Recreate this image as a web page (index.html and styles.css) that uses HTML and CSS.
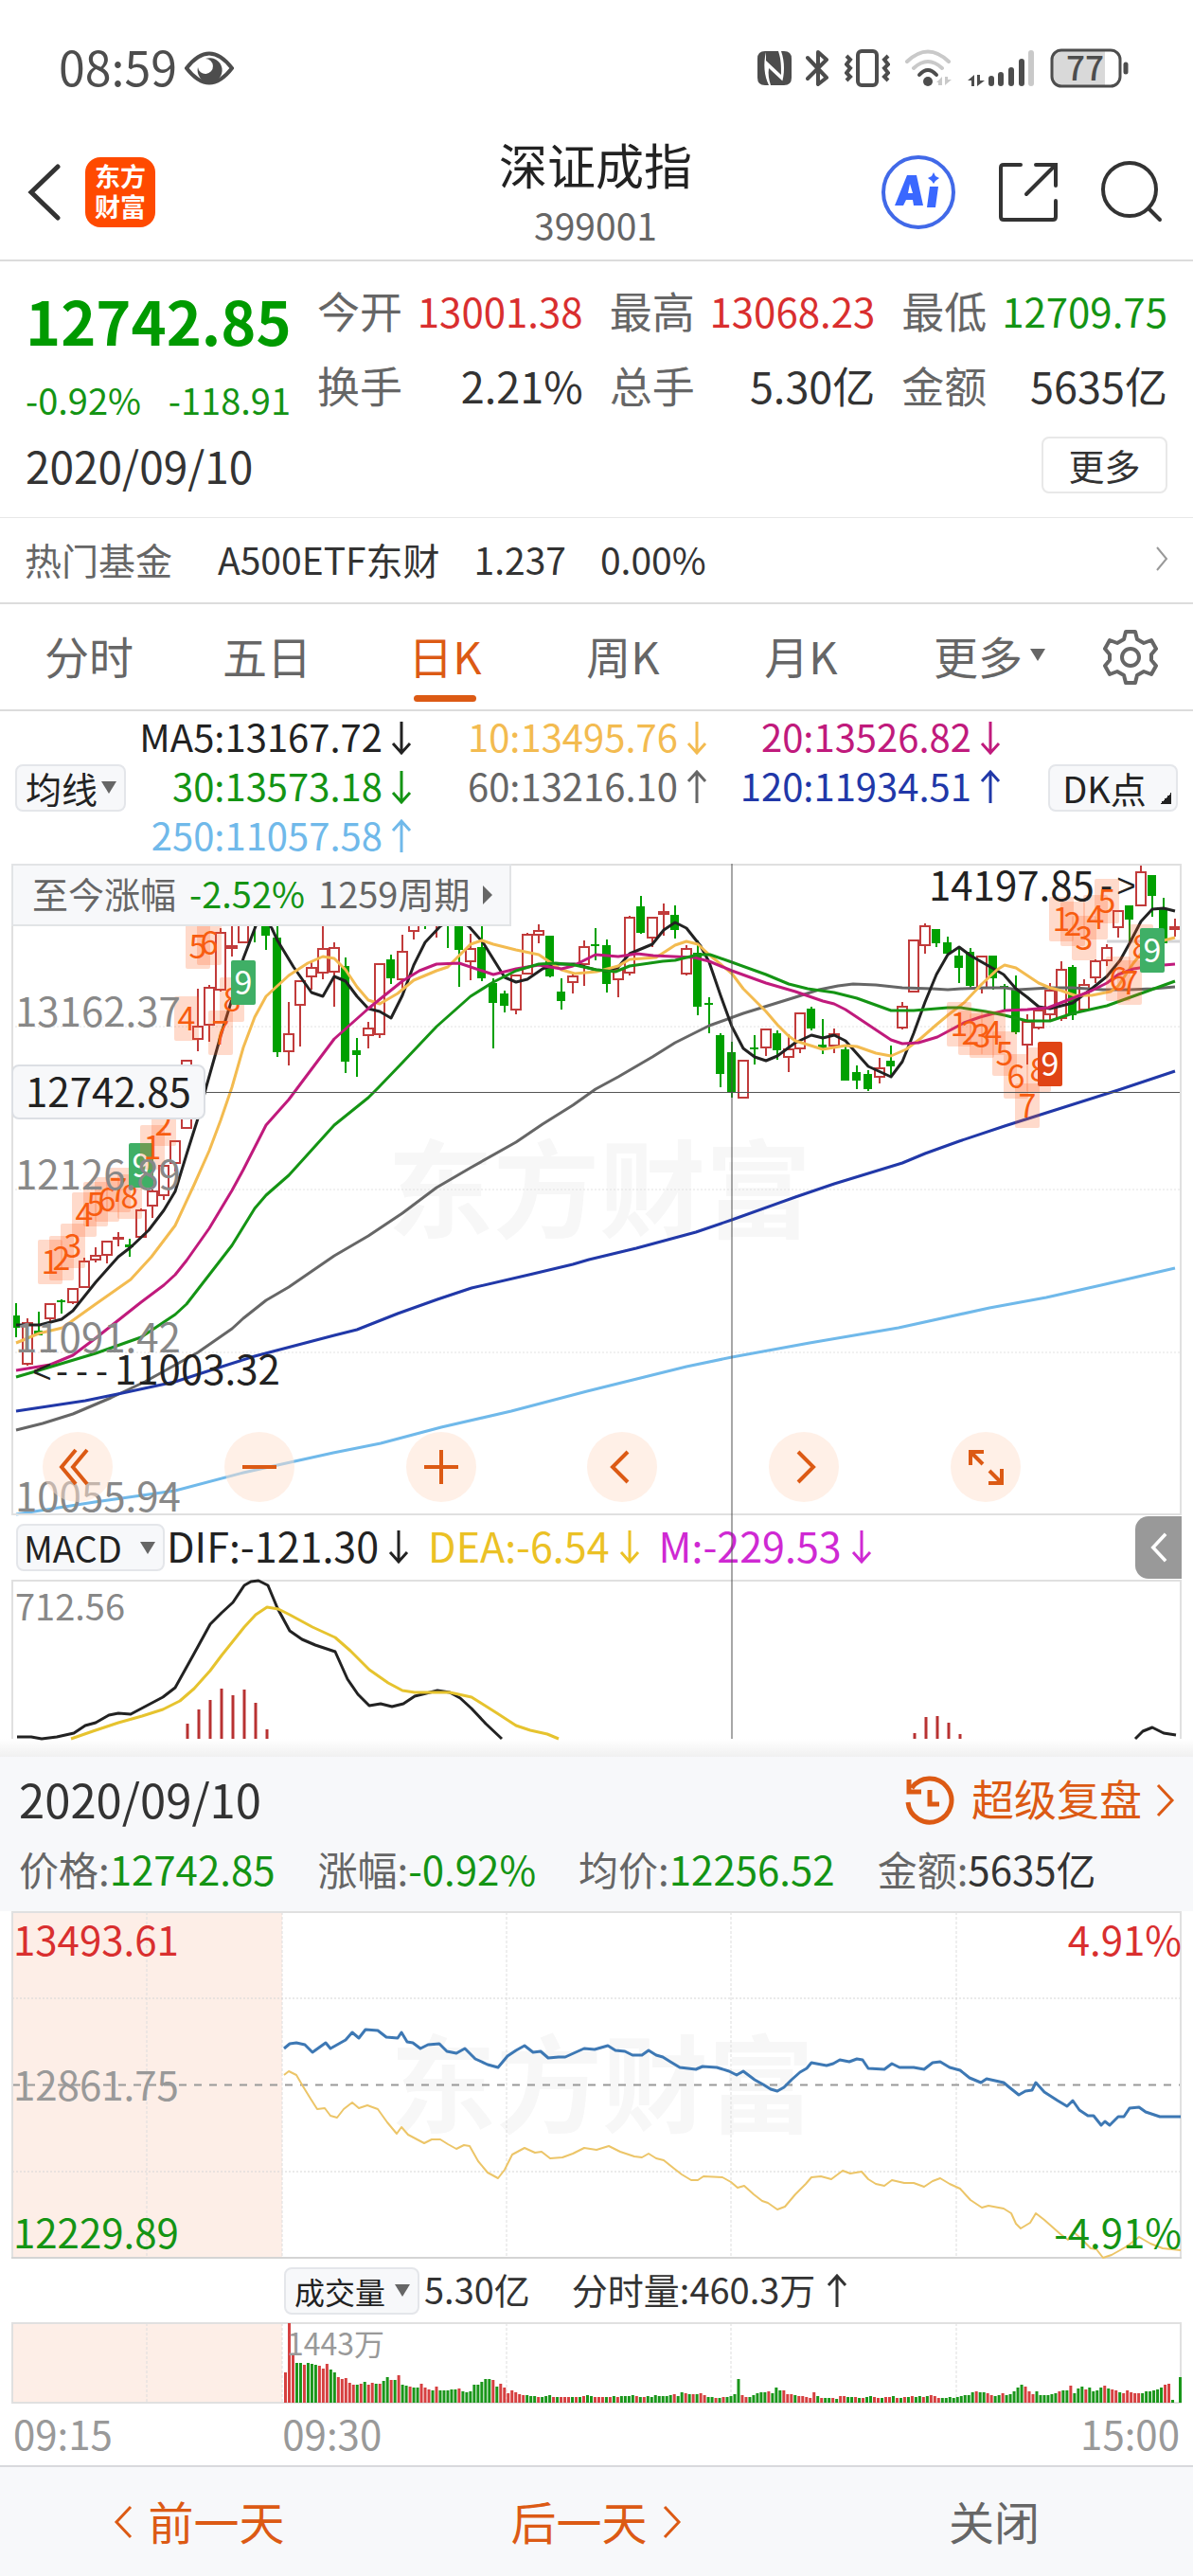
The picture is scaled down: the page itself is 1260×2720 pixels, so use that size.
FILE: index.html
```html
<!DOCTYPE html>
<html lang="zh-CN">
<head>
<meta charset="utf-8">
<meta name="viewport" content="width=device-width, initial-scale=1">
<title>深证成指 399001</title>
<link rel="stylesheet" href="styles.css">
</head>
<body>
<svg class="defs" aria-hidden="true">
  <symbol id="down" viewBox="0 0 22 36"><path d="M11 1V34M2 24L11 34L20 24"/></symbol>
  <symbol id="up" viewBox="0 0 22 36"><path d="M11 35V2M2 12L11 2L20 12"/></symbol>
  <symbol id="left" viewBox="0 0 22 36"><path d="M19 2L4 18L19 34"/></symbol>
  <symbol id="right" viewBox="0 0 22 36"><path d="M3 2L18 18L3 34"/></symbol>
</svg>

<div class="status">
  <span class="clock">08:59</span>
  <svg class="eye" width="52" height="36" viewBox="0 0 52 36"><path d="M2 18Q26-13 50 18Q26 49 2 18Z" fill="none" stroke="#4d4d4d" stroke-width="4"/><path d="M22 8A13 13 0 1 1 14 17A8 8 0 1 0 22 8Z" fill="#4d4d4d"/></svg>
  <div class="signals">
    <svg width="36" height="38" viewBox="0 0 36 38"><path d="M8 1H22C25 10 25 16 25 26L9 11V2C6 14 7 27 12 37H8Q0 37 0 29V9Q0 1 8 1Z" fill="#4d4d4d"/><path d="M25 1H28Q36 1 36 9V29Q36 37 28 37H25C29 26 29 12 25 1ZM12 19L27 33V37H14C12 31 11 25 12 19Z" fill="#4d4d4d"/></svg>
    <svg width="26" height="40" viewBox="0 0 26 40"><path d="M2 9L22 30L13 37V3L22 11L2 31" fill="none" stroke="#4d4d4d" stroke-width="4" stroke-linejoin="round" stroke-linecap="round"/></svg>
    <svg width="48" height="40" viewBox="0 0 48 40"><rect x="14" y="2" width="20" height="36" rx="4" fill="none" stroke="#4d4d4d" stroke-width="4"/><path d="M2 7L6 11L2 16L6 20L2 25L6 29L2 33M46 7L42 11L46 16L42 20L46 25L42 29L46 33" fill="none" stroke="#4d4d4d" stroke-width="4"/></svg>
    <svg width="52" height="40" viewBox="0 0 52 40"><g fill="none" stroke-width="4" stroke-linecap="round"><path d="M3 13Q25-8 47 13M10 20Q25 6 40 20" stroke="#c9c9c9"/><path d="M16 27Q25 17 34 27" stroke="#4d4d4d"/></g><circle cx="25" cy="34" r="5" fill="#4d4d4d"/><path d="M40 29V38H36V35H34ZM43 29V38L50 32H46V29Z" fill="#c9c9c9"/></svg>
    <svg width="72" height="40" viewBox="0 0 72 40"><path d="M7 27V39H4V33H0ZM10 27V39L18 33H13V27Z" fill="#4d4d4d"/><g stroke-width="6" stroke-linecap="round" stroke="#4d4d4d"><path d="M25 31V36M35 27V36M46 22V36M57 13V36"/><path d="M67 4V36" stroke="#c9c9c9"/></g></svg>
    <svg width="84" height="42" viewBox="0 0 84 42"><path d="M10 2H58V40H10Q2 40 2 32V10Q2 2 10 2Z" fill="#d9d9d9"/><rect x="2" y="2" width="72" height="38" rx="10" fill="none" stroke="#4d4d4d" stroke-width="3"/><path d="M80 17V25" stroke="#4d4d4d" stroke-width="5" stroke-linecap="round"/><text x="37" y="34" text-anchor="middle" class="battery">77</text></svg>
  </div>
</div>

<header class="bar">
  <button class="plain" aria-label="返回"><svg width="36" height="60" viewBox="0 0 36 60"><path d="M32 3L4 30L32 57" fill="none" stroke="#333" stroke-width="5" stroke-linecap="round"/></svg></button>
  <a class="logo" href="#home">东方<br>财富</a>
  <div class="title"><h1>深证成指</h1><p>399001</p></div>
  <div class="actions">
    <button class="plain ai" aria-label="Ai"><svg width="80" height="80" viewBox="0 0 80 80"><circle cx="40" cy="40" r="37" fill="none" stroke="#4169e8" stroke-width="4"/><path d="M28 22H38L45 54H35L34 48H27L24 54H15ZM31 31L29 41H34Z" fill="#3a68ff" fill-rule="evenodd"/><path d="M52 34H61L58 56H49ZM56 19L58 23L62 25L58 28L56 31L54 28L50 25L54 23Z" fill="#3a68ff"/></svg></button>
    <button class="plain" aria-label="分享"><svg width="64" height="64" viewBox="0 0 64 64"><path d="M24 3H6Q3 3 3 6V58Q3 61 6 61H58Q61 61 61 58V41M40 3H61V25M61 3L30 34" fill="none" stroke="#333" stroke-width="4" stroke-linecap="round"/></svg></button>
    <button class="plain" aria-label="搜索"><svg width="66" height="66" viewBox="0 0 66 66"><circle cx="31" cy="30" r="28" fill="none" stroke="#333" stroke-width="4"/><path d="M51 50L63 62" stroke="#333" stroke-width="4" stroke-linecap="round"/></svg></button>
  </div>
</header>

<section class="quote">
  <div class="now">
    <strong>12742.85</strong>
    <div class="change"><span>-0.92%</span><span>-118.91</span></div>
  </div>
  <dl>
    <div class="small"><dt>今开</dt><dd class="up">13001.38</dd></div>
    <div class="small"><dt>最高</dt><dd class="up">13068.23</dd></div>
    <div class="small"><dt>最低</dt><dd class="fall">12709.75</dd></div>
    <div><dt>换手</dt><dd>2.21%</dd></div>
    <div><dt>总手</dt><dd>5.30亿</dd></div>
    <div><dt>金额</dt><dd>5635亿</dd></div>
  </dl>
  <div class="day"><time>2020/09/10</time><button>更多</button></div>
</section>

<a class="fund" href="#fund">
  <span class="muted">热门基金</span><span>A500ETF东财</span><span>1.237</span><span>0.00%</span>
  <svg class="go" width="14" height="26" viewBox="0 0 14 26"><path d="M2 1L12 13L2 25" fill="none" stroke="#999" stroke-width="2"/></svg>
</a>

<nav class="tabs">
  <button>分时</button><button>五日</button><button class="active">日K</button><button>周K</button><button>月K</button><button class="more">更多<i class="tri"></i></button>
  <button class="gear" aria-label="设置"><svg width="58" height="60" viewBox="0 0 58 60"><path d="M24 3H34L36 11L43 15L51 12L56 21L51 27V33L56 39L51 48L43 45L36 49L34 57H24L22 49L15 45L7 48L2 39L7 33V27L2 21L7 12L15 15L22 11Z" fill="none" stroke="#666" stroke-width="4" stroke-linejoin="round"/><circle cx="29" cy="30" r="9" fill="none" stroke="#666" stroke-width="4"/></svg></button>
</nav>

<section class="averages">
  <label class="pick"><select aria-label="均线"><option>均线</option></select><i class="tri"></i></label>
  <ul>
    <li class="c5">MA5:13167.72<svg><use href="#down"/></svg></li>
    <li class="c10">10:13495.76<svg><use href="#down"/></svg></li>
    <li class="c20">20:13526.82<svg><use href="#down"/></svg></li>
    <li class="c30">30:13573.18<svg><use href="#down"/></svg></li>
    <li class="c60">60:13216.10<svg><use href="#up"/></svg></li>
    <li class="c120">120:11934.51<svg><use href="#up"/></svg></li>
    <li class="c250">250:11057.58<svg><use href="#up"/></svg></li>
  </ul>
  <button class="dk">DK点</button>
</section>

<section class="charts">
  <div class="kline">
    <svg id="kline" viewBox="12 911 1236 688" role="img" aria-label="日K线图"></svg>
    <button class="since"><span>至今涨幅</span><span class="fall">-2.52%</span><span>1259周期</span><i></i></button>
    <output class="tag">12742.85</output>
    <div class="tools">
      <button aria-label="最左"><svg viewBox="0 0 74 74"><path d="M35 19L20 37L35 55M47 19L32 37L47 55"/></svg></button>
      <button aria-label="缩小"><svg viewBox="0 0 74 74"><path d="M19 37H55"/></svg></button>
      <button aria-label="放大"><svg viewBox="0 0 74 74"><path d="M19 37H55M37 19V55"/></svg></button>
      <button aria-label="左移"><svg viewBox="0 0 74 74"><path d="M43 21L27 37L43 53"/></svg></button>
      <button aria-label="右移"><svg viewBox="0 0 74 74"><path d="M31 21L47 37L31 53"/></svg></button>
      <button aria-label="全屏"><svg viewBox="0 0 74 74"><path d="M21 35V21H35M21 21L34 34M54 39V54H40M54 54L41 41"/></svg></button>
    </div>
  </div>
  <div class="macd">
    <label class="pick"><select aria-label="指标"><option>MACD</option></select><i class="tri"></i></label>
    <span>DIF:-121.30<svg><use href="#down"/></svg></span>
    <span class="dea">DEA:-6.54<svg><use href="#down"/></svg></span>
    <span class="m">M:-229.53<svg><use href="#down"/></svg></span>
    <button class="drawer" aria-label="展开"><svg><use href="#left"/></svg></button>
  </div>
  <svg id="macd" viewBox="12 1667 1236 168" role="img" aria-label="MACD"></svg>
  <div class="crosshair"></div>
</section>

<section class="replay">
  <div class="fade"></div>
  <div class="summary">
    <div class="head">
      <time>2020/09/10</time>
      <a href="#replay"><svg width="54" height="54" viewBox="0 0 54 54"><path d="M8 13A23 23 0 1 1 4 28M5 4V17H18M27 15V30H37" fill="none" stroke="#dc5a14" stroke-width="5"/></svg>超级复盘<svg class="arrow"><use href="#right"/></svg></a>
    </div>
    <div class="figures">
      <span>价格:<b class="fall">12742.85</b></span><span>涨幅:<b class="fall">-0.92%</b></span><span>均价:<b class="fall">12256.52</b></span><span>金额:<b>5635亿</b></span>
    </div>
  </div>
  <div class="intraday">
    <svg id="intraday" viewBox="12 2017 1236 367" role="img" aria-label="分时走势"></svg>
    <div class="volume-head">
      <label class="pick"><select aria-label="副图"><option>成交量</option></select><i class="tri"></i></label>
      <span>5.30亿</span><span class="tick">分时量:460.3万<svg><use href="#up"/></svg></span>
    </div>
    <svg id="volume" viewBox="12 2451 1236 86" role="img" aria-label="成交量"></svg>
    <div class="hours"><span>09:15</span><span>09:30</span><span>15:00</span></div>
  </div>
</section>

<nav class="foot">
  <button><svg><use href="#left"/></svg>前一天</button>
  <button>后一天<svg><use href="#right"/></svg></button>
  <button class="close">关闭</button>
</nav>
<script src="charts.js"></script>
</body>
</html>
```

FILE: styles.css
```css
* { box-sizing: border-box; }
body {
  margin: 0;
  background: #fff;
  color: #333;
  font-family: "Noto Sans CJK SC", "Noto Sans", sans-serif;
  font-size: 40px;
  line-height: 52px;
}
h1, p, dl, dd, ul { margin: 0; padding: 0; font-weight: 400; }
ul { list-style: none; }
button, select {
  font: inherit;
  color: inherit;
  background: none;
  border: 0;
  padding: 0;
  margin: 0;
}
a { color: inherit; text-decoration: none; }
svg { display: block; flex: none; }
.defs { display: none; }
.up { color: #d92f2f; }
.fall { color: #149414; }
.muted { color: #666; }
.tri {
  width: 0;
  height: 0;
  border: 8px solid transparent;
  border-top: 13px solid #666;
  border-bottom: 0;
}

.status {
  display: flex;
  align-items: center;
  padding: 42px 67px 30px 62px;
  height: 132px;
  color: #4d4d4d;
}
.clock { font-size: 50px; line-height: 60px; padding-bottom: 6px; }
.eye { margin-left: 8px; }
.signals { display: flex; align-items: center; gap: 15px; margin-left: auto; }
.battery { font: 500 35px "Noto Sans CJK SC", sans-serif; fill: #4d4d4d; }

.bar {
  display: grid;
  grid-template-columns: 36px 74px 1fr auto;
  column-gap: 25px;
  align-items: center;
  height: 144px;
  padding: 0 32px 0 29px;
  border-bottom: 2px solid #dcdcdc;
  position: relative;
}
.logo {
  height: 74px;
  padding-top: 4px;
  border-radius: 16px;
  background: #ff4a00;
  color: #fff;
  font-size: 27px;
  font-weight: 700;
  line-height: 32px;
  text-align: center;
}
.title {
  position: absolute;
  left: 0;
  right: 2px;
  text-align: center;
  pointer-events: none;
}
.title h1 { font-size: 51px; line-height: 60px; color: #222; }
.title p { margin-top: 8px; font-size: 39px; line-height: 52px; color: #666; }
.actions { grid-column: 4; display: flex; align-items: center; gap: 44px; }

.quote {
  display: grid;
  grid-template-columns: 280px 1fr;
  column-gap: 28px;
  row-gap: 15px;
  padding: 22px 27px 25px 27px;
  border-bottom: 1px solid #e8e8e8;
}
.now strong { display: block; font-size: 63px; line-height: 80px; color: #009a00; }
.change {
  display: flex;
  justify-content: space-between;
  margin-top: 20px;
  font-size: 38px;
  line-height: 48px;
  color: #149414;
}
.quote dl { display: grid; grid-template-columns: repeat(3, 1fr); gap: 19px 28px; align-content: start; }
.quote dl div { display: flex; justify-content: space-between; font-size: 45px; line-height: 60px; }
.quote dl .small dd { font-size: 42px; }
.quote dt { color: #666; }
.day {
  grid-column: 1 / -1;
  display: flex;
  justify-content: space-between;
  font-size: 46px;
  line-height: 60px;
}
.day button {
  width: 133px;
  height: 60px;
  border: 2px solid #e8e8e8;
  border-radius: 8px;
  font-size: 38px;
  line-height: 50px;
}

.fund {
  display: flex;
  align-items: center;
  gap: 36px;
  height: 91px;
  padding: 0 26px 4px 26px;
  border-bottom: 2px solid #dcdcdc;
  font-size: 39px;
}
.fund .muted { margin-right: 12px; }
.go { margin-left: auto; }

.tabs {
  display: grid;
  grid-template-columns: repeat(6, 1fr) 132px;
  height: 113px;
  border-bottom: 2px solid #dcdcdc;
  color: #666;
  font-size: 47px;
}
.tabs button {
  display: flex;
  align-items: center;
  justify-content: center;
  padding-bottom: 4px;
}
.tabs .active { color: #dc5a14; position: relative; }
.tabs .active::after {
  content: "";
  position: absolute;
  bottom: 8px;
  left: 50%;
  width: 66px;
  height: 7px;
  margin-left: -33px;
  border-radius: 4px;
  background: #dc5a14;
}
.tabs .more { gap: 8px; padding-left: 22px; }
.tabs .gear { padding: 0; }

.pick {
  display: flex;
  align-items: center;
  height: 50px;
  border: 2px solid #e4e6ea;
  border-radius: 8px;
  background: #f7f8fa;
  color: #222;
  font-size: 38px;
  position: relative;
}
.pick select { appearance: none; width: 100%; height: 46px; line-height: 46px; padding: 0 0 3px 9px; }
.pick .tri { position: absolute; right: 8px; pointer-events: none; }

.averages { display: flex; align-items: center; height: 161px; padding: 0 16px; }
.averages .pick { width: 117px; }
.averages ul { flex: 1; display: grid; grid-template-columns: 302fr 312fr 310fr; padding-bottom: 5px; }
.averages li {
  display: flex;
  justify-content: flex-end;
  gap: 9px;
  font-size: 40px;
}
.averages li svg, .macd span svg, .tick svg {
  width: 22px;
  height: 36px;
  margin-top: 10px;
  fill: none;
  stroke: currentColor;
  stroke-width: 3;
}
.dk {
  width: 137px;
  height: 50px;
  margin-left: 50px;
  padding-right: 18px;
  border: 2px solid #e4e6ea;
  border-radius: 8px;
  background: linear-gradient(135deg, transparent 50%, #222 50%) 116px 28px / 12px 12px no-repeat #f7f8fa;
  color: #222;
  font-size: 38px;
  line-height: 42px;
}
.c5 { color: #222; }
.c10 { color: #f3bb50; }
.c20 { color: #c01a7c; }
.c30 { color: #149414; }
.c60 { color: #666; }
.c120 { color: #2138a8; }
.c250 { color: #70b9ea; }

.charts { position: relative; margin: 0 12px; }
.charts > svg, .kline > svg, .intraday > svg { width: 100%; height: auto; overflow: visible; }
.kline { position: relative; }
.crosshair {
  position: absolute;
  top: 0;
  bottom: 0;
  left: 61.5%;
  width: 2px;
  background: rgba(80, 80, 80, .5);
  pointer-events: none;
}
.since {
  position: absolute;
  left: 0;
  top: 0;
  display: flex;
  align-items: center;
  gap: 14px;
  height: 66px;
  padding: 0 18px 4px 20px;
  border: 2px solid #e2e4e6;
  background: #f7f8fa;
  color: #666;
  font-size: 38px;
}
.since i {
  margin-top: 4px;
  border: 10px solid transparent;
  border-left-color: #666;
  border-right: 0;
}
.tag {
  position: absolute;
  left: 0;
  top: 30.8%;
  width: 205px;
  height: 58px;
  border: 2px solid #dcdfe4;
  border-radius: 8px;
  background: #f7f8fa;
  color: #222;
  font-size: 42px;
  line-height: 50px;
  text-align: center;
}
.tools {
  position: absolute;
  left: 33px;
  right: 170px;
  bottom: 14px;
  display: flex;
  justify-content: space-between;
}
.tools button { width: 74px; height: 74px; border-radius: 50%; background: rgba(255, 225, 208, .5); }
.tools path { fill: none; stroke: #dc5a14; stroke-width: 4; }

.macd {
  display: flex;
  align-items: center;
  height: 68px;
  padding-left: 5px;
  gap: 20px;
  color: #222;
  font-size: 43px;
}
.macd .pick { width: 157px; margin-right: -18px; }
.macd .pick select { padding-left: 6px; }
.macd span { display: flex; gap: 10px; padding-bottom: 6px; }
.macd .dea { color: #ebc125; }
.macd .m { color: #cf29d3; }
.drawer {
  width: 49px;
  height: 66px;
  margin-left: auto;
  border-radius: 14px 0 0 14px;
  background: #999;
}
.drawer svg { width: 22px; height: 32px; margin: 0 auto; fill: none; stroke: #fff; stroke-width: 4; }

.fade { height: 19px; background: linear-gradient(#fff, #f0f0f0); }
.summary { padding: 14px 18px 20px 20px; background: #f7f8fa; }
.head { display: flex; justify-content: space-between; font-size: 49px; line-height: 60px; }
.head a { display: flex; align-items: center; font-size: 45px; color: #dc5a14; }
.head a svg { margin: 6px 17px 0 0; }
.head a .arrow { width: 22px; height: 36px; margin: 4px 0 0 14px; fill: none; stroke: #dc5a14; stroke-width: 3; }
.figures { display: flex; gap: 45px; margin-top: 19px; font-size: 42px; line-height: 50px; color: #666; }
.figures b { font-weight: 400; color: #333; }
.figures .fall { color: #149414; }
.intraday { margin: 0 12px; }
.volume-head {
  display: flex;
  align-items: center;
  height: 67px;
  padding-left: 288px;
  font-size: 38px;
}
.volume-head .pick { width: 143px; margin-right: 5px; font-size: 32px; }
.volume-head span { display: flex; padding-bottom: 4px; }
.volume-head .tick { margin-left: 44px; gap: 12px; }
.hours {
  display: grid;
  grid-template-columns: 3fr 5fr 5fr;
  padding: 1px 2px 4px 2px;
  font-size: 42px;
  line-height: 60px;
  color: #999;
}
.hours :last-child { text-align: right; }

.foot {
  display: grid;
  grid-template-columns: repeat(3, 1fr);
  height: 117px;
  border-top: 2px solid #d8d9dd;
  background: #f7f8fa;
  color: #dc5a14;
  font-size: 48px;
}
.foot button { display: flex; align-items: center; justify-content: center; gap: 15px; padding-bottom: 4px; }
.foot svg { width: 22px; height: 36px; margin-top: 4px; fill: none; stroke: currentColor; stroke-width: 3; }
.foot .close { color: #666; }

.axis { font-size: 42px; fill: #888; }
.axis.dark { fill: #222; }
.axis.red { fill: #d92f2f; }
.axis.green { fill: #149414; }
.axis.pale { fill: #999; }
.axis.end { text-anchor: end; }
.axis.mid { font-size: 38px; }
.axis.low { font-size: 32px; fill: #999; }
.lead { font: 35px "Liberation Mono", monospace; fill: #222; }
.mark { font-size: 34px; text-anchor: middle; fill: #f75c0f; }
.mark.nine { fill: #fff; }
.water { font-size: 112px; font-weight: 700; fill: #f7f7f7; }
```

FILE: charts.js
```js
const NS = 'http://www.w3.org/2000/svg';

function add(svg, tag, attrs, text) {
  const el = document.createElementNS(NS, tag);
  for (const key in attrs) el.setAttribute(key, attrs[key]);
  if (text) el.textContent = text;
  svg.appendChild(el);
  return el;
}
const line = (svg, points, stroke, width) =>
  add(svg, 'polyline', { points, stroke, 'stroke-width': width, fill: 'none', 'stroke-linejoin': 'round' });
const path = (svg, d, stroke, width, dash) =>
  add(svg, 'path', { d, stroke, 'stroke-width': width, fill: 'none', 'stroke-dasharray': dash || 'none' });
const label = (svg, x, y, cls, text) => add(svg, 'text', { x, y, class: cls }, text);

const RED = '#c13b3b';
const GREEN = '#00a000';

/* Daily candles: colour, high, body top, body bottom, low */
const candles = `g1375,1388,1401,1411 r1391,1396,1439,1441 g1384,1404,1409,1409 r1375,1376,1391,1396 g1371,1372,1374,1386
r1359,1360,1374,1376 r1327,1331,1358,1358 r1316,1325,1329,1332 r1310,1310,1324,1333 r1300,1306,1307,1315
g1307,1313,1316,1326 r1275,1277,1305,1305 r1255,1257,1272,1285 r1230,1230,1261,1266 r1203,1204,1227,1236
r1119,1119,1190,1190 r1043,1083,1096,1109 r1039,1042,1081,1099 r979,984,1044,1046 r970,998,1000,1009
r950,960,994,994 g950,955,970,994 g965,968,987,1002 g977,989,1110,1115 r1057,1091,1109,1124
r1034,1035,1060,1104 r1014,1021,1030,1044 r970,1001,1026,1033 r994,1000,1025,1062 g1010,1019,1120,1132
g1095,1108,1113,1136 r1078,1085,1092,1106 r1016,1017,1091,1095 g1007,1012,1032,1038 r986,1004,1033,1043
r970,972,982,991 g960,965,972,980 r950,955,970,989 g950,955,972,1000 g960,970,1002,1041
r985,1001,1014,1034 g970,999,1032,1035 g1032,1037,1058,1106 g1045,1048,1061,1068 r1029,1029,1065,1070
r984,986,1027,1028 r975,982,986,995 g987,987,1030,1031 g1032,1046,1056,1065 r1027,1030,1036,1048
r992,999,1017,1040 g979,996,998,1013 g991,997,1038,1047 r1020,1023,1033,1052 r966,968,1026,1029
g945,956,984,985 r968,968,989,999 r953,962,964,987 g955,965,981,990 r997,1001,1027,1029
g992,1005,1062,1071 g1052,1058,1060,1090 g1090,1092,1133,1147 g1099,1110,1152,1158 r1118,1119,1158,1158
g1092,1105,1107,1123 r1086,1086,1105,1114 g1087,1090,1108,1118 r1091,1107,1115,1131 r1069,1069,1106,1111
g1062,1064,1085,1087 g1075,1102,1106,1112 r1085,1091,1103,1111 g1104,1107,1140,1140 g1124,1131,1140,1149
g1129,1133,1149,1151 r1116,1127,1136,1143 g1103,1119,1125,1137 r1057,1062,1084,1086 r992,992,1046,1046
r974,977,997,1006 g980,980,995,999 g988,994,1006,1007 g1000,1008,1021,1037 g1000,1004,1040,1044
r1009,1009,1042,1048 g1008,1008,1032,1044 g1038,1040,1041,1065 g1029,1043,1089,1091 r1070,1078,1102,1123
r1063,1066,1084,1086 r1037,1045,1070,1078 r1014,1023,1074,1077 g1018,1020,1071,1076 r1033,1039,1065,1067
r1012,1014,1031,1037 r996,1000,1013,1019 r961,961,978,989 g955,955,970,993 r911,920,955,955
g923,923,945,967 g947,958,995,997 r969,978,980,988`.split(/\s+/);

const averages = [
  ['#666', '17,1509 45,1502 77,1492 117,1475 153,1458 209,1427 245,1402 257,1391 281,1372 305,1358 353,1325 389,1304 425,1280 461,1253 497,1232 545,1205 573,1186 605,1166 629,1149 653,1136 689,1115 713,1100 749,1082 785,1069 840,1052 865,1044 885,1040 901,1038 925,1039 953,1042 985,1043 1001,1044 1015,1043 1041,1042 1061,1042 1075,1044 1109,1042 1133,1042 1165,1044 1193,1044 1217,1043 1241,1041'],
  ['#2138a8', '17,1489 90,1478 129,1470 185,1458 225,1445 269,1431 353,1409 377,1403 420,1386 462,1371 498,1359 563,1344 605,1334 622,1329 672,1317 735,1300 773,1287 840,1263 881,1249 953,1227 977,1217 1013,1204 1061,1188 1121,1169 1181,1150 1241,1130'],
  ['#70b9ea', '17,1598 100,1585 185,1573 257,1554 352,1533 402,1523 466,1506 540,1489 620,1468 725,1442 773,1432 855,1417 949,1401 1045,1380 1105,1369 1163,1356 1241,1338'],
  ['#222', '17,1398 42,1398 65,1392 77,1383 101,1353 125,1326 138,1316 157,1298 173,1277 185,1257 197,1218 209,1180 218,1146 233,1093 245,1054 257,1011 270,977 277,965 287,979 293,992 310,1020 329,1047 341,1051 353,1030 365,1035 377,1051 389,1064 401,1067 413,1074 425,1050 437,1018 449,994 465,977 480,968 495,977 510,994 533,1031 545,1036 557,1033 573,1022 587,1017 607,1017 629,1023 641,1024 653,1020 665,1006 689,996 701,981 713,973 725,979 740,998 749,1015 761,1050 773,1083 785,1106 797,1115 809,1119 821,1114 840,1100 857,1092 869,1095 881,1092 893,1098 917,1125 941,1136 953,1120 965,1090 977,1057 989,1028 1001,1007 1013,999 1025,1008 1060,1028 1073,1043 1085,1052 1097,1062 1109,1064 1133,1058 1153,1043 1169,1030 1183,1013 1193,995 1205,972 1217,959 1229,958 1241,961'],
  ['#f3bb50', '17,1417 41,1407 66,1401 101,1376 138,1350 160,1326 185,1293 205,1250 221,1214 233,1182 245,1147 257,1105 269,1073 281,1051 305,1029 325,1016 341,1009 353,1011 365,1023 377,1041 389,1055 401,1059 420,1048 437,1034 461,1024 473,1020 485,1008 497,996 509,992 521,996 545,1002 569,1007 593,1023 607,1027 630,1025 653,1019 665,1012 693,1010 713,997 725,993 737,996 749,1007 773,1027 785,1043 809,1067 821,1081 833,1093 840,1098 869,1107 893,1103 905,1104 925,1111 941,1114 957,1107 973,1095 989,1081 1001,1071 1019,1057 1037,1038 1053,1023 1061,1018 1073,1021 1097,1037 1109,1042 1121,1045 1135,1050 1153,1050 1173,1046 1181,1040 1197,1016 1210,1000 1225,993 1241,989'],
  ['#c01a7c', '17,1446 53,1440 77,1430 101,1412 149,1374 173,1356 185,1345 197,1330 221,1296 245,1256 257,1234 281,1187 305,1160 353,1096 389,1064 405,1051 425,1035 443,1024 461,1017 485,1016 521,1028 545,1022 569,1018 593,1022 605,1019 629,1007 653,1009 673,1006 690,1008 733,1010 749,1014 773,1024 809,1037 840,1046 869,1056 881,1059 893,1065 941,1097 953,1101 970,1100 990,1094 1018,1079 1035,1073 1061,1066 1085,1065 1107,1063 1133,1053 1153,1045 1169,1037 1181,1028 1197,1022 1217,1019 1241,1017'],
  ['#149414', '17,1453 41,1446 101,1428 149,1411 185,1387 197,1376 245,1314 269,1275 281,1261 305,1240 353,1187 389,1158 400,1147 425,1121 461,1083 497,1051 521,1036 545,1024 569,1017 587,1016 607,1018 630,1023 650,1025 665,1019 700,1014 713,1013 737,1007 750,1007 773,1015 809,1028 833,1038 853,1043 881,1047 905,1053 941,1066 965,1066 1001,1063 1015,1063 1041,1067 1061,1071 1085,1077 1109,1077 1133,1069 1169,1061 1205,1048 1241,1035']
];

/* Sequence marks: digit, candle index, top of the box; a fill for the final nine */
const marks = [
  [1, 3, 1308], [2, 4, 1304], [3, 5, 1291], [4, 6, 1258], [5, 7, 1247], [6, 8, 1242], [7, 9, 1232], [8, 10, 1239], [9, 11, 1206, '#3faf66'],
  [1, 12, 1187], [2, 13, 1162], [4, 15, 1051], [5, 16, 975], [6, 17, 971], [7, 18, 1066], [8, 19, 1031], [9, 20, 1013, '#3faf66'],
  [1, 83, 1057], [2, 84, 1066], [3, 85, 1069], [4, 86, 1066], [5, 87, 1088], [6, 88, 1112], [7, 89, 1143], [8, 90, 1105], [9, 91, 1099, '#e04415'],
  [1, 92, 946], [2, 93, 951], [3, 94, 966], [4, 95, 944], [5, 96, 927], [6, 97, 1009], [7, 98, 1013], [8, 99, 975], [9, 100, 979, '#3faf66']
];

function drawKline() {
  const svg = document.getElementById('kline');
  label(svg, 409, 1298, 'water', '东方财富');
  path(svg, 'M12 1083H1247M12 1255H1247M12 1427H1247', '#e2e2e2', 1, '2 2');
  path(svg, 'M1169 993H1247', '#d4d4d6', 3);
  candles.forEach((item, i) => {
    const x = 17 + 12 * i;
    const [high, top, bottom, low] = item.slice(1).split(',').map(Number);
    const red = item[0] === 'r';
    const color = red ? RED : GREEN;
    path(svg, `M${x} ${high}V${top}M${x} ${bottom}V${low}`, color, 2);
    if (red) add(svg, 'rect', { x: x - 5, y: top, width: 10, height: Math.max(1, bottom - top), fill: '#fff', stroke: color, 'stroke-width': 2 });
    else add(svg, 'rect', { x: x - 5, y: top, width: 9, height: Math.max(2, bottom - top), fill: color });
  });
  averages.forEach(([color, points]) => line(svg, points, color, 3));
  marks.forEach(([digit, i, y, fill]) => {
    const x = 17 + 12 * i;
    add(svg, 'rect', { x: x - 13, y, width: 26, height: 47, rx: 2, fill: fill || 'rgba(255,95,30,.23)' });
    label(svg, x, y + 36, fill ? 'mark nine' : 'mark', String(digit));
  });
  label(svg, 16, 1083, 'axis', '13162.37');
  label(svg, 16, 1255, 'axis', '12126.89');
  label(svg, 16, 1427, 'axis', '11091.42');
  label(svg, 16, 1595, 'axis', '10055.94');
  label(svg, 34, 1459, 'lead', '<---');
  label(svg, 121, 1461, 'axis dark', '11003.32');
  label(svg, 981, 950, 'axis dark', '14197.85');
  label(svg, 1158, 946, 'lead', '->');
  path(svg, 'M217 1152.5H1247', '#555', 1);
  path(svg, 'M13 912H1247V1598H13Z', '#e0e0e0', 2);
}

function drawMacd() {
  const svg = document.getElementById('macd');
  path(svg, 'M13 1835V1668H1247V1835', '#e0e0e0', 2);
  label(svg, 16, 1710, 'axis mid', '712.56');
  path(svg, [[198, 1819], [210, 1804], [222, 1794], [234, 1782], [246, 1789], [258, 1783], [270, 1797], [282, 1825],
    [966, 1829], [978, 1812], [990, 1811], [1002, 1818], [1014, 1830]].map(([x, y]) => `M${x} ${y}V1835`).join(''), '#b83232', 3);
  line(svg, '18,1833 33,1833 44,1835 60,1833 78,1829 90,1821 101,1818 115,1810 125,1808 138,1809 155,1800 172,1791 185,1781 205,1745 222,1714 234,1702 246,1691 258,1673 265,1669 273,1668 283,1673 293,1697 306,1721 319,1730 333,1736 354,1743 367,1772 378,1788 390,1800 402,1798 414,1801 426,1798 438,1790 450,1787 462,1784 475,1786 486,1792 498,1803 513,1819 530,1835', '#222', 3);
  line(svg, '1199,1835 1207,1827 1217,1823 1229,1829 1242,1831', '#222', 3);
  line(svg, '75,1835 98,1827 125,1818 150,1811 172,1804 190,1795 205,1782 222,1763 234,1747 246,1732 258,1717 270,1704 282,1696 294,1698 306,1704 330,1717 354,1728 370,1742 390,1762 410,1776 425,1784 438,1786 475,1786 498,1791 525,1808 545,1821 560,1826 578,1830 590,1835', '#e6c32e', 3);
}

function drawIntraday() {
  const svg = document.getElementById('intraday');
  label(svg, 412, 2243, 'water', '东方财富');
  add(svg, 'rect', { x: 13, y: 2017, width: 285, height: 366, fill: '#fdeee7' });
  path(svg, 'M155 2018V2383M298 2018V2383M535 2018V2383M772 2018V2383M1010 2018V2383', '#ddd', 1, '3 2');
  path(svg, 'M13 2109H1247M13 2292H1247', '#d6d6d6', 1, '2 2');
  path(svg, 'M13 2200.5H1247', '#999', 2, '8 8');
  path(svg, 'M13 2383V2018H1247V2383', '#e0e0e0', 2);
  path(svg, 'M12 2383H1248', '#d4d4d4', 2);
  line(svg, '300,2190 305,2186 313,2190 320,2202 328,2215 335,2226 343,2225 349,2233 356,2235 363,2226 372,2219 379,2225 388,2222 399,2226 409,2240 419,2252 424,2245 431,2253 448,2262 456,2258 465,2258 473,2263 482,2268 490,2264 496,2265 505,2281 515,2293 526,2299 533,2290 541,2274 554,2267 565,2272 572,2271 581,2278 594,2277 605,2273 617,2267 630,2269 643,2265 655,2271 670,2276 678,2277 685,2273 693,2278 701,2280 711,2288 720,2295 730,2301 737,2301 743,2297 763,2298 772,2303 779,2309 786,2307 796,2316 805,2323 811,2325 821,2332 829,2329 840,2316 851,2305 857,2298 867,2297 878,2300 890,2291 898,2294 910,2292 917,2300 925,2305 934,2307 942,2301 955,2304 965,2304 976,2308 985,2302 993,2299 1003,2305 1014,2310 1025,2322 1037,2330 1044,2328 1060,2331 1068,2336 1073,2347 1078,2352 1088,2346 1094,2336 1103,2343 1120,2358 1128,2364 1134,2356 1142,2363 1152,2373 1158,2374 1165,2383 1174,2380 1190,2371 1203,2361 1215,2368 1228,2373 1247,2375', '#ecc568', 2);
  line(svg, '300,2162 306,2157 313,2156 322,2158 330,2166 344,2156 349,2162 365,2153 372,2145 379,2151 386,2142 399,2143 408,2150 420,2151 424,2145 430,2155 436,2156 444,2162 452,2158 464,2157 472,2165 482,2167 491,2162 502,2173 515,2179 526,2182 536,2170 545,2164 554,2159 563,2166 571,2165 579,2172 590,2171 597,2171 608,2166 617,2162 628,2163 642,2159 650,2164 660,2165 668,2169 678,2169 685,2164 693,2169 700,2171 708,2176 718,2182 735,2184 742,2181 757,2182 770,2186 778,2190 785,2186 797,2195 806,2200 814,2205 821,2207 828,2203 836,2195 845,2187 852,2183 857,2177 873,2180 880,2178 887,2174 897,2176 905,2173 911,2174 917,2183 934,2184 942,2178 950,2182 965,2182 976,2184 985,2177 993,2176 1003,2182 1014,2185 1024,2193 1036,2198 1042,2194 1060,2198 1066,2203 1076,2211 1083,2207 1090,2206 1094,2198 1103,2208 1117,2217 1127,2223 1133,2217 1140,2227 1149,2233 1155,2233 1163,2243 1167,2239 1172,2243 1181,2234 1187,2234 1193,2225 1203,2224 1210,2229 1225,2234 1247,2234', '#3d78b4', 3);
  label(svg, 14, 2064, 'axis red', '13493.61');
  label(svg, 14, 2217, 'axis pale', '12861.75');
  label(svg, 14, 2373, 'axis green', '12229.89');
  label(svg, 1248, 2064, 'axis red end', '4.91%');
  label(svg, 1248, 2373, 'axis green end', '-4.91%');
}

/* Minute volume: colour and height */
const volumes = `r32 r84 r51 g42 g42 r40 g42 g41 g40 r39 r36 r41 g35 g32 r27 r25 r26 r21 r19 g19 r20 g22 r19 r21 g20 r20 g23 g27 r24 g24
r29 g19 g18 r17 g16 g16 r20 r16 r14 g13 r17 g13 g13 g13 g14 g14 r15 g12 g11 g12 g19 g19 g22 g25 g25 r24 g17 r20 r16 r10
r13 r11 r9 r8 g8 g7 g7 r6 g6 g7 g8 r6 g6 r6 r6 r6 g6 r6 g6 r7 g8 g7 r6 r6 r6 g6 r6 g7 r6 g7
g7 g7 g8 r7 g6 r6 g7 g6 g8 g7 g7 g7 g8 r9 g7 g11 r10 g9 r9 g9 r10 r8 g6 g6 r5 g5 r6 g6 g7 g9
g25 r8 r6 g6 g8 g10 g11 g11 r12 g10 g16 g13 r13 r9 r9 g8 r7 r7 r6 r5 r11 g7 r5 g5 g5 r5 g4 r7 r7 g6
g6 r6 g5 r5 g6 g7 r6 r5 g5 r6 r6 g7 r5 g5 r6 g6 r7 g6 g7 r6 g7 r8 r7 r5 g5 g5 g6 g5 g6 g7
g8 g8 g11 r12 g11 g11 r10 r8 g7 g8 r10 g8 g9 g12 g16 g19 r17 r12 r9 g12 g8 g8 g8 g9 g10 r12 g13 g13 r18 g10
g15 g17 r14 g16 g12 g13 g16 r18 g15 r14 r13 g11 r10 r13 r11 r10 r10 g10 g12 g12 g13 g14 g16 r19 r20 g3 r0 g27`.split(/\s+/);

function drawVolume() {
  const svg = document.getElementById('volume');
  add(svg, 'rect', { x: 13, y: 2451, width: 285, height: 85, fill: '#fdeee7' });
  path(svg, 'M155 2452V2536M298 2452V2536M535 2452V2536M772 2452V2536M1010 2452V2536', '#ddd', 1, '3 2');
  path(svg, 'M13 2452H1247V2536H13Z', '#e0e0e0', 2);
  volumes.forEach((item, i) => {
    const height = Number(item.slice(1));
    const x = 300 + i * 945 / (volumes.length - 1);
    add(svg, 'rect', { x, y: 2536 - height, width: 3, height, fill: item[0] === 'r' ? '#d64040' : '#1a961a' });
  });
  label(svg, 303, 2486, 'axis low', '1443万');
}

drawKline();
drawMacd();
drawIntraday();
drawVolume();
```
